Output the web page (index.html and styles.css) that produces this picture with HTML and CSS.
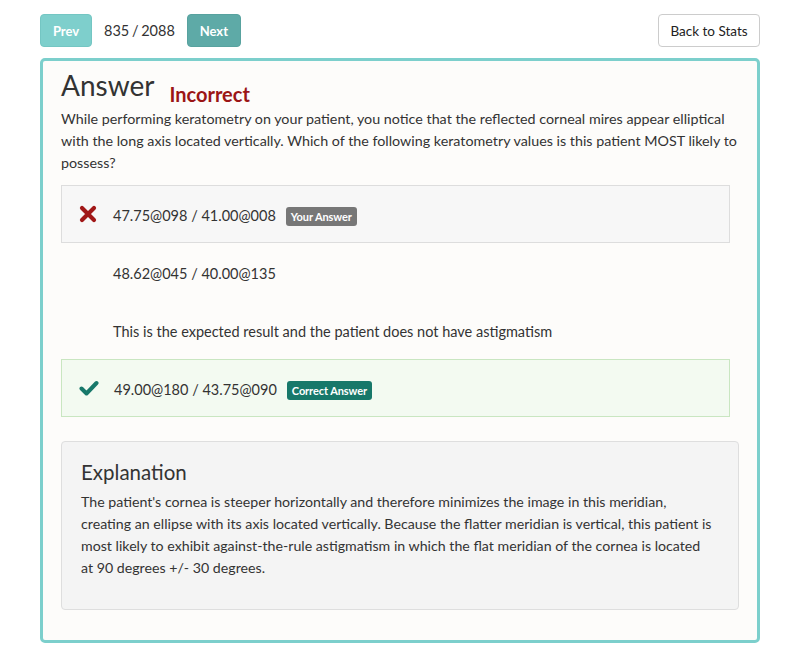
FILE: index.html
```html
<!DOCTYPE html>
<html>
<head>
<meta charset="utf-8">
<link rel="stylesheet" href="styles.css">
</head>
<body>
<div class="page">
  <div class="toolbar">
    <div class="nav">
      <button class="btn btn-prev">Prev</button>
      <span class="counter">835 / 2088</span>
      <button class="btn btn-next">Next</button>
    </div>
    <button class="btn btn-back">Back to Stats</button>
  </div>
  <div class="card">
    <h1 class="title">Answer <span class="status">Incorrect</span></h1>
    <p class="question">While performing keratometry on your patient, you notice that the reflected corneal mires appear elliptical with the long axis located vertically. Which of the following keratometry values is this patient MOST likely to possess?</p>
    <ul class="answers">
      <li class="answer answer-wrong">
        <svg class="icon" viewBox="0 0 18 18" width="18" height="18"><path d="M3 3 L15 15 M15 3 L3 15" stroke="#a11717" stroke-width="4.2" stroke-linecap="round"/></svg>
        <span class="answer-text">47.75@098 / 41.00@008</span>
        <span class="badge badge-grey">Your Answer</span>
      </li>
      <li class="answer">
        <span class="icon icon-empty"></span>
        <span class="answer-text">48.62@045 / 40.00@135</span>
      </li>
      <li class="answer">
        <span class="icon icon-empty"></span>
        <span class="answer-text">This is the expected result and the patient does not have astigmatism</span>
      </li>
      <li class="answer answer-right">
        <svg class="icon" viewBox="0 0 20 18" width="20" height="18"><path d="M2.5 9.5 L7.5 14.5 L17.5 4" fill="none" stroke="#17786a" stroke-width="4" stroke-linecap="round" stroke-linejoin="round"/></svg>
        <span class="answer-text">49.00@180 / 43.75@090</span>
        <span class="badge badge-green">Correct Answer</span>
      </li>
    </ul>
    <div class="well">
      <h2 class="well-title">Explanation</h2>
      <p class="well-text">The patient's cornea is steeper horizontally and therefore minimizes the image in this meridian, creating an ellipse with its axis located vertically. Because the flatter meridian is vertical, this patient is most likely to exhibit against-the-rule astigmatism in which the flat meridian of the cornea is located at 90 degrees +/- 30 degrees.</p>
    </div>
  </div>
</div>
</body>
</html>
```

FILE: styles.css
```css
* { box-sizing: border-box; }
html, body { margin: 0; padding: 0; background: #ffffff; }
body {
  font-family: Lato, "Open Sans", "Liberation Sans", sans-serif;
  color: #333333;
  font-size: 14.3px;
  line-height: 22px;
}
.page {
  width: 720px;
  margin: 0 auto;
  padding-top: 14px;
}
.toolbar {
  display: flex;
  justify-content: space-between;
  align-items: center;
  height: 33px;
  margin-bottom: 11px;
}
.nav {
  display: flex;
  align-items: center;
  gap: 11px;
}
.btn {
  font-family: inherit;
  height: 33px;
  border-radius: 4px;
  border: 1px solid transparent;
  font-size: 14px;
  padding: 0 12px;
  cursor: pointer;
}
.btn-prev {
  width: 52px;
  background: #7ecfcc;
  border-color: #74c6c3;
  color: #ffffff;
  font-weight: bold;
  font-size: 13px;
  padding: 0;
}
.btn-next {
  width: 54px;
  background: #5eaaa7;
  border-color: #58a29f;
  color: #ffffff;
  font-weight: bold;
  font-size: 13px;
  padding: 0;
}
.btn-back {
  width: 102px;
  padding: 0;
  background: #ffffff;
  border-color: #cccccc;
  color: #222222;
  font-size: 13.5px;
}
.counter {
  font-size: 14.5px;
  color: #333333;
  word-spacing: -1px;
  padding: 0 1px;
}
.card {
  border: 3px solid #7ccfcc;
  border-radius: 5px;
  background: #fdfcfa;
  padding: 8px 18px 30px 18px;
}
.title {
  margin: 0;
  font-size: 28px;
  line-height: 33px;
  font-weight: normal;
  color: #333333;
  display: flex;
  align-items: baseline;
}
.status {
  color: #9b1515;
  font-size: 20px;
  font-weight: bold;
  margin-left: 15px;
  position: relative;
  top: 6px;
}
.question {
  margin: 3px 0 11px 0;
}
.answers {
  list-style: none;
  margin: 0 9px 24px 0;
  padding: 0;
}
.answer {
  display: flex;
  align-items: center;
  height: 58px;
  padding: 4px 17px 0 17px;
  border: 1px solid transparent;
}
.answer-wrong {
  background: #f7f7f7;
  border-color: #dddddd;
}
.answer-right {
  background: #f3faf1;
  border-color: #c9e6c1;
}
.icon {
  flex: none;
  width: 18px;
  height: 18px;
  margin-right: 16px;
  margin-top: -4px;
}
.answer-right .icon {
  width: 20px;
  margin-right: 15px;
}
.answer-text {
  font-size: 14.5px;
}
.badge {
  display: inline-block;
  margin-left: 10px;
  font-size: 11px;
  line-height: 13px;
  font-weight: bold;
  color: #ffffff;
  padding: 3px 5px 3px 5px;
  border-radius: 3px;
  letter-spacing: -0.1px;
}
.badge-grey { background: #777777; }
.badge-green { background: #17786a; }
.well {
  background: #f4f4f4;
  border: 1px solid #dedede;
  border-radius: 4px;
  padding: 15px 25px 30px 19px;
}
.well-title {
  margin: 0 0 4px 0;
  font-size: 20.5px;
  line-height: 30px;
  font-weight: normal;
  color: #333333;
}
.well-text {
  margin: 0;
  font-size: 14.2px;
}
```
